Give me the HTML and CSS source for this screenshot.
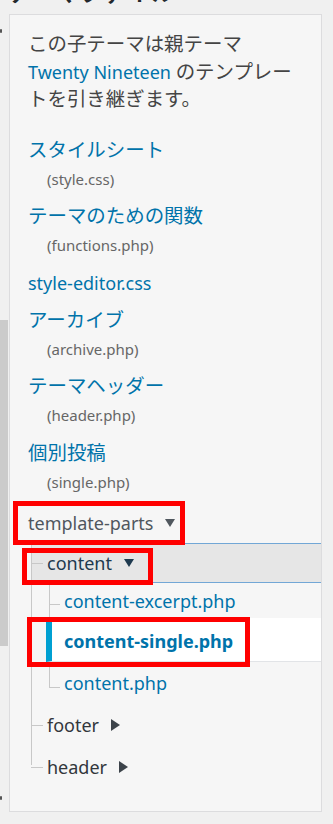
FILE: index.html
```html
<!DOCTYPE html>
<html lang="ja">
<head>
<meta charset="utf-8">
<title>テーマファイル</title>
<link rel="stylesheet" href="styles.css">
</head>
<body>
<div class="title"><h2>テーマファイル</h2></div>
<div class="layout">
  <div class="side">
    <span class="tick tick-top"></span>
    <span class="scroll"></span>
    <span class="tick tick-bottom"></span>
  </div>
  <div class="panel">
    <p class="desc"><span class="ja">この子テーマは親テーマ</span> <a href="#">Twenty Nineteen</a> <span class="ja">のテンプレートを引き継ぎます。</span></p>
    <ul class="files">
      <li><a class="name" href="#"><span class="ja">スタイルシート</span></a><span class="sub">(style.css)</span></li>
      <li><a class="name" href="#"><span class="ja">テーマのための関数</span></a><span class="sub">(functions.php)</span></li>
      <li><a class="name" href="#">style-editor.css</a></li>
      <li><a class="name" href="#"><span class="ja">アーカイブ</span></a><span class="sub">(archive.php)</span></li>
      <li><a class="name" href="#"><span class="ja">テーマヘッダー</span></a><span class="sub">(header.php)</span></li>
      <li><a class="name" href="#"><span class="ja">個別投稿</span></a><span class="sub">(single.php)</span></li>
    </ul>
    <div class="tree">
      <div class="tp-row">template-parts<span class="caret-down"></span></div>
      <ul class="lvl1">
        <li>
          <div class="row row-open">content<span class="caret-down"></span></div>
          <ul class="lvl2">
            <li><div class="row row-excerpt"><a href="#">content-excerpt.php</a></div></li>
            <li><div class="row row-current"><a href="#">content-single.php</a></div></li>
            <li><div class="row row-plain"><a href="#">content.php</a></div></li>
          </ul>
        </li>
        <li><div class="row row-closed">footer<span class="caret-right"></span></div></li>
        <li><div class="row row-closed">header<span class="caret-right"></span></div></li>
      </ul>
    </div>
    <div class="mark mark-1"></div>
    <div class="mark mark-2"></div>
    <div class="mark mark-3"></div>
  </div>
</div>
</body>
</html>
```
FILE: styles.css
```css
* { box-sizing: border-box; }
html, body { margin: 0; padding: 0; }
body {
  width: 333px;
  height: 824px;
  overflow: hidden;
  background: #f0f0f0;
  font-family: "Noto Sans", "Noto Sans CJK JP", sans-serif;
  color: #444;
}
a { color: #0073aa; text-decoration: none; }

.title { height: 14px; overflow: hidden; }
.title h2 {
  margin: -18px 0 0 8px;
  font-family: "Noto Sans CJK JP", sans-serif;
  font-size: 21px;
  line-height: 21px;
  font-weight: 700;
  color: #23282d;
  letter-spacing: 3px;
}

.layout { display: flex; }
.side { width: 9px; display: flex; flex-direction: column; }
.tick { width: 2px; height: 4px; background: #555; border-radius: 1px; }
.tick-top { margin-top: 15px; }
.scroll { width: 8px; height: 326px; background: #cbcbcb; margin-top: 287px; }
.tick-bottom { margin-top: 150px; }

.panel {
  position: relative;
  width: 313px;
  height: 798px;
  background: #f6f6f6;
  border: 1px solid #dcdcde;
  padding: 16px 0 0 18px;
}

.desc {
  margin: 0 0 21px;
  width: 270px;
  font-size: 18px;
  line-height: 27.5px;
  color: #444;
}
.ja { font-size: 1.08em; line-height: 1; }

.files { list-style: none; margin: 0; padding: 0; }
.files li { padding-bottom: 7px; }
.name { display: block; height: 30px; font-size: 18px; line-height: 30px; }
.sub { display: block; height: 29.5px; font-size: 15px; line-height: 29.5px; color: #666; padding-left: 19px; }

.tree { margin-top: -1px; }
.tp-row {
  height: 40px;
  display: flex;
  align-items: center;
  font-size: 18px;
  color: #50575e;
}
.caret-down {
  display: inline-block;
  width: 0; height: 0;
  border-left: 5px solid transparent;
  border-right: 5px solid transparent;
  border-top: 8px solid currentColor;
  margin-left: 12px;
}
.caret-right {
  display: inline-block;
  width: 0; height: 0;
  border-top: 6px solid transparent;
  border-bottom: 6px solid transparent;
  border-left: 9px solid #3c434a;
  margin-left: 12px;
}

.lvl1, .lvl2 { list-style: none; margin: 0; padding: 0; }
.lvl1 { margin-left: 3px; }
.lvl2 { margin-left: 18px; }
.lvl1 > li, .lvl2 > li { position: relative; }
.lvl1 > li::before, .lvl2 > li::before {
  content: "";
  position: absolute;
  left: 0; top: 0; bottom: 0;
  border-left: 1px solid #c8c8c8;
}
.lvl1 > li:last-child::before { bottom: auto; height: 19px; }
.lvl2 > li:last-child::before { bottom: auto; height: 25px; }

.row {
  position: relative;
  display: flex;
  align-items: center;
  font-size: 18px;
  line-height: 24px;
}
.row::before {
  content: "";
  position: absolute;
  left: 0;
  top: 50%;
  border-top: 1px solid #c8c8c8;
}
.lvl1 > li > .row { height: 42px; padding-left: 16px; color: #32373c; }
.lvl1 > li > .row::before { width: 12px; }

.lvl1 > li > .row-open {
  height: 40px;
  margin-left: 1px;
  padding-left: 15px;
  background: #e6e6e6;
  border-top: 1px solid #72a7d6;
  border-bottom: 1px solid #72a7d6;
  color: #1e3a4f;
}
.lvl1 > li > .row-open::before { left: -1px; }

.lvl2 > li > .row { padding-left: 15px; }
.lvl2 > li > .row::before { width: 11px; top: auto; bottom: 13px; }
.lvl2 > li > .row-excerpt { height: 35px; }
.lvl2 > li > .row-plain { height: 42px; }
.lvl2 > li > .row-plain::before { bottom: 16px; }
.lvl2 > li > .row-current {
  height: 44px;
  margin-left: -3px;
  padding-left: 12px;
  padding-top: 3px;
  background: #fff;
  border-left: 6px solid #00a0d2;
  border-bottom: 1px solid #e2e4e7;
  font-weight: 700;
}
.lvl2 > li > .row-current::before { display: none; }

.mark {
  position: absolute;
  border: 5px solid #ff0000;
  z-index: 2;
}
.mark-1 { left: 3px; top: 486px; width: 172px; height: 44px; }
.mark-2 { left: 12px; top: 533px; width: 131px; height: 37px; }
.mark-3 { left: 17px; top: 602px; width: 223px; height: 50px; }
```
